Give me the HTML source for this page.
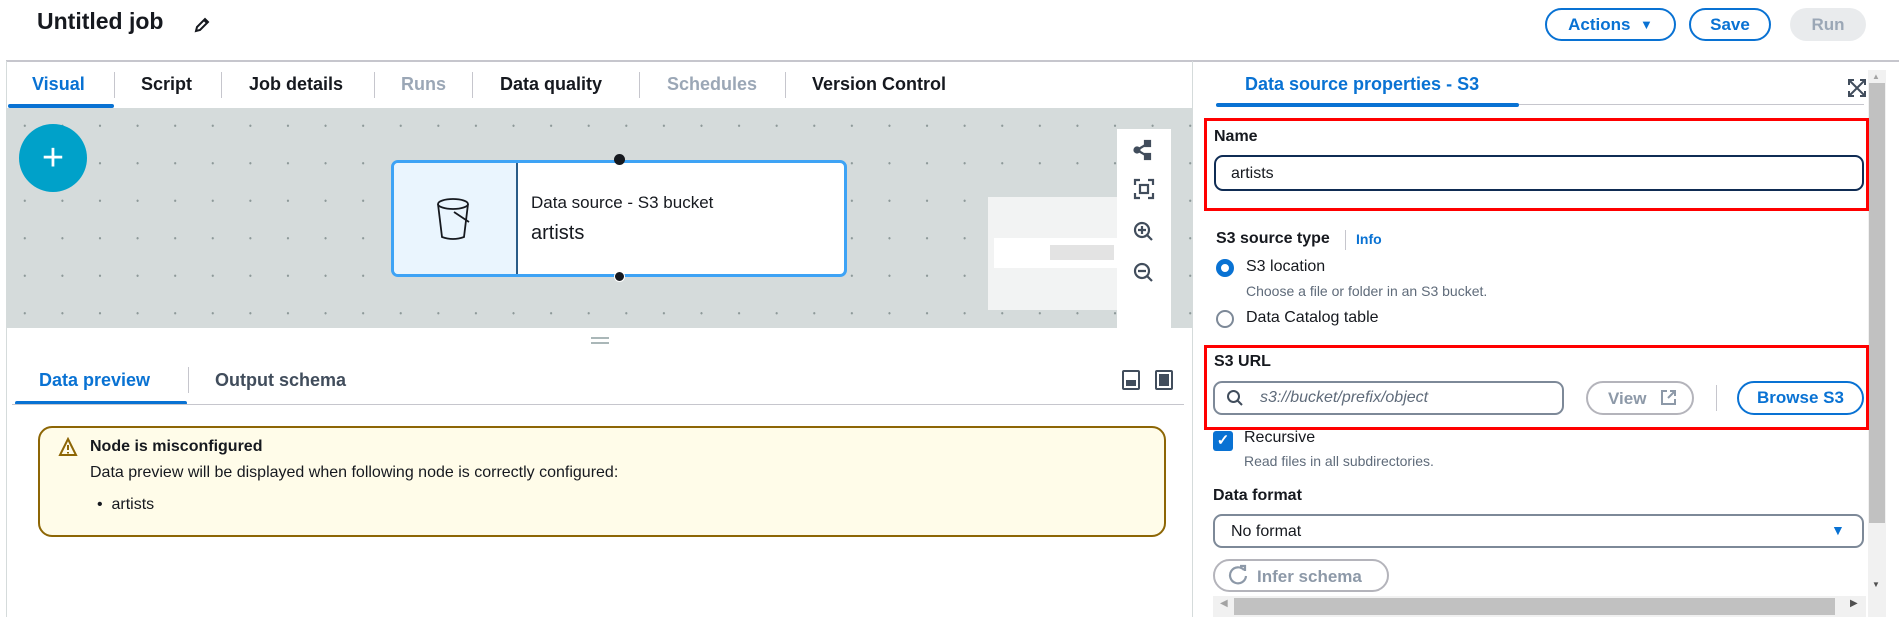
<!DOCTYPE html>
<html><head><meta charset="utf-8"><style>
*{box-sizing:border-box;margin:0;padding:0}
body{width:1899px;height:639px;background:#fff;font-family:"Liberation Sans",sans-serif;color:#16191f;position:relative;overflow:hidden}
.a{position:absolute}
.btn{position:absolute;border:2px solid #0972d3;border-radius:20px;color:#0972d3;font-weight:bold;font-size:17px;display:flex;align-items:center;justify-content:center}
.tab{position:absolute;top:74px;font-size:18px;font-weight:bold;color:#16191f}
.sep{position:absolute;top:72px;width:1px;height:26px;background:#c6c6cd}
.lbl{position:absolute;font-size:16px;font-weight:bold}
.desc{position:absolute;font-size:14px;color:#5f6b7a}
</style></head><body>
<div class="a" style="left:37px;top:8px;font-size:23px;font-weight:bold">Untitled job</div>
<svg class="a" style="left:192px;top:15px" width="20" height="20" viewBox="0 0 20 20"><path d="M4 16 L5 12 L13 4 L16 7 L8 15 Z M12 5 L15 8" fill="none" stroke="#16191f" stroke-width="2"/></svg>
<div class="btn" style="left:1545px;top:8px;width:131px;height:33px">Actions&nbsp;&nbsp;<span style="font-size:13px">▼</span></div>
<div class="btn" style="left:1689px;top:8px;width:82px;height:33px">Save</div>
<div class="a" style="left:1790px;top:8px;width:76px;height:33px;border-radius:20px;background:#e9ebed;color:#9ba7b6;font-weight:bold;font-size:17px;display:flex;align-items:center;justify-content:center">Run</div>
<div class="a" style="left:6px;top:60px;width:1893px;height:2px;background:#c6c6cd"></div>
<div class="a" style="left:1192px;top:61px;width:1px;height:556px;background:#d5dbdb"></div>
<div class="a" style="left:6px;top:61px;width:1px;height:556px;background:#d5dbdb"></div>
<div class="tab" style="left:32px;color:#0972d3">Visual</div>
<div class="a" style="left:8px;top:104px;width:106px;height:4px;background:#0972d3;border-radius:2px"></div>
<div class="sep" style="left:114px"></div><div class="tab" style="left:141px">Script</div>
<div class="sep" style="left:221px"></div><div class="tab" style="left:249px">Job details</div>
<div class="sep" style="left:374px"></div><div class="tab" style="left:401px;color:#9ba7b6">Runs</div>
<div class="sep" style="left:472px"></div><div class="tab" style="left:500px">Data quality</div>
<div class="sep" style="left:639px"></div><div class="tab" style="left:667px;color:#9ba7b6">Schedules</div>
<div class="sep" style="left:785px"></div><div class="tab" style="left:812px">Version Control</div>
<div class="a" style="left:6px;top:108px;width:1186px;height:220px;background-color:#d5dbdb;background-image:radial-gradient(circle,#8d9999 1px,transparent 1.3px);background-size:37.6px 37.5px;background-position:0 -1px"></div>
<div class="a" style="left:19px;top:124px;width:68px;height:68px;border-radius:50%;background:#00a1c9;color:#fff;font-size:38px;display:flex;align-items:center;justify-content:center;font-weight:300">+</div>
<div class="a" style="left:988px;top:197px;width:134px;height:113px;background:#f2f3f3"></div>
<div class="a" style="left:994px;top:238px;width:128px;height:30px;background:#fff"></div>
<div class="a" style="left:1050px;top:245px;width:64px;height:15px;background:#e3e3e3"></div>
<div class="a" style="left:1117px;top:129px;width:54px;height:199px;background:#fff"></div>
<svg class="a" style="left:1133px;top:139px" width="22" height="200" viewBox="0 0 22 200" fill="none" stroke="#414d5c" stroke-width="2.2">
<path d="M4 11 L14 5 M4 11 L14 17" /><circle cx="4" cy="11" r="2.5" fill="#414d5c"/><rect x="12" y="2" width="5" height="5" fill="#414d5c"/><rect x="12" y="15" width="5" height="5" fill="#414d5c"/>
<path d="M2 46 V41 H7 M15 41 H20 V46 M20 54 V59 H15 M7 59 H2 V54"/><rect x="7" y="46" width="8" height="8"/>
<circle cx="9" cy="91" r="7"/><path d="M14 96 L19 101 M9 87 V95 M5 91 H13"/>
<circle cx="9" cy="132" r="7"/><path d="M14 137 L19 142 M5 132 H13"/>
</svg>
<div class="a" style="left:391px;top:160px;width:456px;height:117px;border:3px solid #3ea3f5;border-radius:7px;background:#fff;overflow:hidden">
<div class="a" style="left:0;top:0;width:124px;height:111px;background:#eaf5fe;border-right:2px solid #2a5c88"></div>
<svg class="a" style="left:42px;top:34px" width="40" height="46" viewBox="0 0 40 46" fill="none" stroke="#16191f" stroke-width="1.8"><ellipse cx="17" cy="7" rx="15" ry="5"/><path d="M2 7 L6 40 Q17 44 28 40 L32 7"/><path d="M18 15 L33 25"/></svg>
<div class="a" style="left:137px;top:30px;font-size:17px">Data source - S3 bucket</div>
<div class="a" style="left:137px;top:59px;font-size:20px">artists</div>
</div>
<div class="a" style="left:614px;top:154px;width:11px;height:11px;border-radius:50%;background:#16191f"></div>
<div class="a" style="left:614px;top:271px;width:11px;height:11px;border-radius:50%;background:#16191f;border:1px solid #fff"></div>
<div class="a" style="left:591px;top:337px;width:18px;height:2px;background:#aab7b8"></div>
<div class="a" style="left:591px;top:342px;width:18px;height:2px;background:#aab7b8"></div>
<div class="a" style="left:39px;top:370px;font-size:18px;font-weight:bold;color:#0972d3">Data preview</div>
<div class="a" style="left:188px;top:367px;width:1px;height:26px;background:#c6c6cd"></div>
<div class="a" style="left:215px;top:370px;font-size:18px;font-weight:bold;color:#414d5c">Output schema</div>
<div class="a" style="left:15px;top:401px;width:172px;height:4px;background:#0972d3;border-radius:2px"></div>
<div class="a" style="left:12px;top:404px;width:1172px;height:1px;background:#c6c6cd"></div>
<div class="a" style="left:1122px;top:370px;width:18px;height:20px;border:2px solid #414d5c;border-radius:2px"><div class="a" style="left:2px;top:8px;width:10px;height:6px;background:#414d5c"></div></div>
<div class="a" style="left:1155px;top:370px;width:18px;height:20px;border:2px solid #414d5c;border-radius:2px"><div class="a" style="left:2px;top:2px;width:10px;height:12px;background:#414d5c"></div></div>
<div class="a" style="left:38px;top:426px;width:1128px;height:111px;border:2px solid #8d6605;border-radius:14px;background:#fffce9"></div>
<svg class="a" style="left:58px;top:437px" width="20" height="20" viewBox="0 0 20 20" fill="none" stroke="#8d6605" stroke-width="2"><path d="M10 2 L18 18 H2 Z"/><path d="M10 8 V13 M10 15 V16.5"/></svg>
<div class="a" style="left:90px;top:438px;font-size:16px;font-weight:bold">Node is misconfigured</div>
<div class="a" style="left:90px;top:464px;font-size:16px">Data preview will be displayed when following node is correctly configured:</div>
<div class="a" style="left:97px;top:496px;font-size:16px">•&nbsp;&nbsp;artists</div>
<div class="a" style="left:1245px;top:74px;font-size:18px;font-weight:bold;color:#0972d3">Data source properties - S3</div>
<div class="a" style="left:1216px;top:104px;width:648px;height:1px;background:#c6c6cd"></div>
<div class="a" style="left:1216px;top:103px;width:303px;height:4px;background:#0972d3;border-radius:2px"></div>
<svg class="a" style="left:1848px;top:79px" width="18" height="18" viewBox="0 0 18 18" fill="none" stroke="#414d5c" stroke-width="2"><path d="M1 6 V1 H6 M12 1 H17 V6 M17 12 V17 H12 M6 17 H1 V12 M2 2 L16 16 M16 2 L2 16"/></svg>
<div class="a" style="left:1868px;top:70px;width:18px;height:547px;background:#f1f1f1"></div>
<div class="a" style="left:1869px;top:83px;width:16px;height:440px;background:#c1c1c1"></div>
<div class="a" style="left:1872px;top:72px;font-size:8px;color:#a3a3a3">▲</div>
<div class="a" style="left:1872px;top:580px;font-size:8px;color:#505050">▼</div>
<div class="a" style="left:1204px;top:118px;width:665px;height:93px;border:3px solid #f00"></div>
<div class="lbl" style="left:1214px;top:128px">Name</div>
<div class="a" style="left:1214px;top:155px;width:650px;height:36px;border:2px solid #0f2c54;border-radius:9px;font-size:16px;padding:8px 15px">artists</div>
<div class="lbl" style="left:1216px;top:230px">S3 source type</div>
<div class="a" style="left:1345px;top:230px;width:1px;height:20px;background:#c6c6cd"></div>
<div class="a" style="left:1356px;top:231px;font-size:14px;font-weight:bold;color:#0972d3">Info</div>
<div class="a" style="left:1216px;top:259px;width:18px;height:18px;border-radius:50%;border:5px solid #0972d3"></div>
<div class="a" style="left:1246px;top:258px;font-size:16px">S3 location</div>
<div class="desc" style="left:1246px;top:283px">Choose a file or folder in an S3 bucket.</div>
<div class="a" style="left:1216px;top:310px;width:18px;height:18px;border-radius:50%;border:2px solid #7d8998"></div>
<div class="a" style="left:1246px;top:309px;font-size:16px">Data Catalog table</div>
<div class="a" style="left:1204px;top:345px;width:665px;height:85px;border:3px solid #f00"></div>
<div class="lbl" style="left:1214px;top:353px">S3 URL</div>
<div class="a" style="left:1213px;top:381px;width:351px;height:34px;border:2px solid #7d8998;border-radius:9px"></div>
<svg class="a" style="left:1226px;top:389px" width="18" height="18" viewBox="0 0 18 18" fill="none" stroke="#414d5c" stroke-width="2"><circle cx="7.5" cy="7.5" r="5.5"/><path d="M11.5 11.5 L16 16"/></svg>
<div class="a" style="left:1260px;top:389px;font-size:16px;font-style:italic;color:#5f6b7a">s3://bucket/prefix/object</div>
<div class="a" style="left:1586px;top:381px;width:108px;height:34px;border:2px solid #b4b4bb;border-radius:18px;color:#8d99a8;font-weight:bold;font-size:17px;padding:6px 0 0 20px">View</div>
<svg class="a" style="left:1660px;top:389px" width="17" height="17" viewBox="0 0 17 17" fill="none" stroke="#8d99a8" stroke-width="2"><path d="M7 2 H2 V15 H15 V10 M10 2 H15 V7 M15 2 L8 9"/></svg>
<div class="a" style="left:1716px;top:385px;width:1px;height:26px;background:#c6c6cd"></div>
<div class="btn" style="left:1737px;top:381px;width:127px;height:34px">Browse S3</div>
<div class="a" style="left:1213px;top:431px;width:20px;height:20px;border-radius:3px;background:#0972d3;color:#fff;font-size:15px;font-weight:bold;text-align:center;line-height:20px">✓</div>
<div class="a" style="left:1244px;top:429px;font-size:16px">Recursive</div>
<div class="desc" style="left:1244px;top:453px">Read files in all subdirectories.</div>
<div class="lbl" style="left:1213px;top:487px">Data format</div>
<div class="a" style="left:1213px;top:514px;width:651px;height:34px;border:2px solid #7d8998;border-radius:9px;font-size:16px;padding:7px 16px">No format</div>
<div class="a" style="left:1831px;top:522px;font-size:14px;color:#0972d3">▼</div>
<div class="a" style="left:1213px;top:559px;width:176px;height:33px;border:2px solid #b4b4bb;border-radius:18px;color:#8d99a8;font-weight:bold;font-size:17px;padding:6px 0 0 42px">Infer schema</div>
<svg class="a" style="left:1228px;top:564px" width="20" height="22" viewBox="0 0 20 22" fill="none" stroke="#8d99a8" stroke-width="2.2"><path d="M16 6 A8 8 0 1 0 18 12"/><path d="M12 2 H17 V7"/></svg>
<div class="a" style="left:1213px;top:596px;width:653px;height:21px;background:#f1f1f1"></div>
<div class="a" style="left:1234px;top:598px;width:601px;height:17px;background:#c1c1c1"></div>
<div class="a" style="left:1220px;top:598px;font-size:10px;color:#a3a3a3">◀</div>
<div class="a" style="left:1850px;top:598px;font-size:10px;color:#505050">▶</div>
</body></html>
